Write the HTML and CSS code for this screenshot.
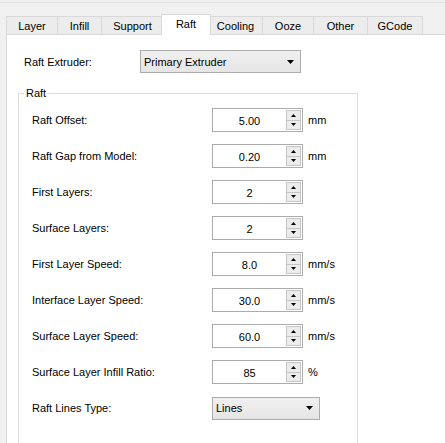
FILE: index.html
```html
<!DOCTYPE html>
<html>
<head>
<meta charset="utf-8">
<link rel="stylesheet" href="styles.css">
</head>
<body>
<div class="window">
  <div class="tabbar">
    <div class="tab t-layer">Layer</div>
    <div class="tab t-infill">Infill</div>
    <div class="tab t-support">Support</div>
    <div class="tab t-raft selected">Raft</div>
    <div class="tab t-cooling">Cooling</div>
    <div class="tab t-ooze">Ooze</div>
    <div class="tab t-other">Other</div>
    <div class="tab t-gcode">GCode</div>
  </div>
  <div class="pane">
    <div class="extruder-row">
      <span class="ext-label">Raft Extruder:</span>
      <div class="combo combo-ext"><span>Primary Extruder</span><svg class="arrow" width="7" height="4" viewBox="0 0 7 4"><path d="M0 0H7L3.5 4Z" fill="#000"/></svg></div>
    </div>
    <fieldset class="group">
      <legend>Raft</legend>
      <div class="rows">
        <div class="row"><span class="label">Raft Offset:</span><div class="spin"><span class="val">5.00</span><div class="btns"><div class="btn"><svg width="5" height="3" viewBox="0 0 5 3"><path d="M2.5 0L5 3H0Z" fill="#000"/></svg></div><div class="btn"><svg width="5" height="3" viewBox="0 0 5 3"><path d="M0 0H5L2.5 3Z" fill="#000"/></svg></div></div></div><span class="unit">mm</span></div>
        <div class="row"><span class="label">Raft Gap from Model:</span><div class="spin"><span class="val">0.20</span><div class="btns"><div class="btn"><svg width="5" height="3" viewBox="0 0 5 3"><path d="M2.5 0L5 3H0Z" fill="#000"/></svg></div><div class="btn"><svg width="5" height="3" viewBox="0 0 5 3"><path d="M0 0H5L2.5 3Z" fill="#000"/></svg></div></div></div><span class="unit">mm</span></div>
        <div class="row"><span class="label">First Layers:</span><div class="spin"><span class="val">2</span><div class="btns"><div class="btn"><svg width="5" height="3" viewBox="0 0 5 3"><path d="M2.5 0L5 3H0Z" fill="#000"/></svg></div><div class="btn"><svg width="5" height="3" viewBox="0 0 5 3"><path d="M0 0H5L2.5 3Z" fill="#000"/></svg></div></div></div></div>
        <div class="row"><span class="label">Surface Layers:</span><div class="spin"><span class="val">2</span><div class="btns"><div class="btn"><svg width="5" height="3" viewBox="0 0 5 3"><path d="M2.5 0L5 3H0Z" fill="#000"/></svg></div><div class="btn"><svg width="5" height="3" viewBox="0 0 5 3"><path d="M0 0H5L2.5 3Z" fill="#000"/></svg></div></div></div></div>
        <div class="row"><span class="label">First Layer Speed:</span><div class="spin"><span class="val">8.0</span><div class="btns"><div class="btn"><svg width="5" height="3" viewBox="0 0 5 3"><path d="M2.5 0L5 3H0Z" fill="#000"/></svg></div><div class="btn"><svg width="5" height="3" viewBox="0 0 5 3"><path d="M0 0H5L2.5 3Z" fill="#000"/></svg></div></div></div><span class="unit">mm/s</span></div>
        <div class="row"><span class="label">Interface Layer Speed:</span><div class="spin"><span class="val">30.0</span><div class="btns"><div class="btn"><svg width="5" height="3" viewBox="0 0 5 3"><path d="M2.5 0L5 3H0Z" fill="#000"/></svg></div><div class="btn"><svg width="5" height="3" viewBox="0 0 5 3"><path d="M0 0H5L2.5 3Z" fill="#000"/></svg></div></div></div><span class="unit">mm/s</span></div>
        <div class="row"><span class="label">Surface Layer Speed:</span><div class="spin"><span class="val">60.0</span><div class="btns"><div class="btn"><svg width="5" height="3" viewBox="0 0 5 3"><path d="M2.5 0L5 3H0Z" fill="#000"/></svg></div><div class="btn"><svg width="5" height="3" viewBox="0 0 5 3"><path d="M0 0H5L2.5 3Z" fill="#000"/></svg></div></div></div><span class="unit">mm/s</span></div>
        <div class="row"><span class="label">Surface Layer Infill Ratio:</span><div class="spin"><span class="val">85</span><div class="btns"><div class="btn"><svg width="5" height="3" viewBox="0 0 5 3"><path d="M2.5 0L5 3H0Z" fill="#000"/></svg></div><div class="btn"><svg width="5" height="3" viewBox="0 0 5 3"><path d="M0 0H5L2.5 3Z" fill="#000"/></svg></div></div></div><span class="unit">%</span></div>
        <div class="row"><span class="label">Raft Lines Type:</span><div class="combo combo-lines"><span>Lines</span><svg class="arrow" width="7" height="4" viewBox="0 0 7 4"><path d="M0 0H7L3.5 4Z" fill="#000"/></svg></div></div>
      </div>
    </fieldset>
  </div>
</div>
</body>
</html>
```

FILE: styles.css
```css
html, body {
  margin: 0;
  padding: 0;
  background: #f0f0f0;
  font-family: "Liberation Sans", Arial, sans-serif;
  font-size: 11px;
  color: #000;
  overflow: hidden;
}
.window {
  width: 445px;
  height: 443px;
  overflow: hidden;
  padding-top: 14px;
  box-sizing: border-box;
  border-top: 1px solid #e2e2e2;
  margin-top: 2px;
}
.window {
  padding-top: 11px;
}
.tabbar {
  display: flex;
  align-items: flex-end;
  height: 21px;
  padding-left: 6px;
}
.tab {
  box-sizing: border-box;
  height: 18px;
  margin-bottom: 1px;
  margin-right: -1px;
  border: 1px solid #d9d9d9;
  border-bottom: none;
  background: #ececec;
  display: flex;
  align-items: center;
  justify-content: center;
  padding-top: 1px;
}
.tab.selected {
  position: relative;
  z-index: 2;
  height: 21px;
  margin-bottom: 0;
  margin-left: -2px;
  margin-right: -3px;
  background: #fff;
  padding-top: 0;
  padding-bottom: 2px;
}
.t-layer { width: 52px; }
.t-infill { width: 45px; }
.t-support { width: 63px; }
.t-raft { width: 50px; }
.t-cooling { width: 55px; }
.t-ooze { width: 52px; }
.t-other { width: 55px; }
.t-gcode { width: 56px; }
.pane {
  margin-top: -1px;
  margin-left: 6px;
  width: 520px;
  height: 420px;
  background: #fff;
  border: 1px solid #d9d9d9;
  padding: 15px 0 0 11px;
  box-sizing: border-box;
}
.extruder-row {
  display: flex;
  align-items: center;
  height: 23px;
  padding-left: 6px;
}
.ext-label {
  width: 116px;
}
.combo {
  box-sizing: border-box;
  height: 23px;
  border: 1px solid #acacac;
  background: linear-gradient(#f0f0f0, #e5e5e5);
  display: flex;
  align-items: center;
  justify-content: space-between;
  padding: 0 6px 0 3px;
}
.combo-ext { width: 161px; }
.combo-lines { width: 108px; }
.arrow { display: block; }
.group {
  margin: 14px 0 0 0;
  padding: 0;
  width: 340px;
  box-sizing: border-box;
  border: 1px solid #dcdcdc;
  min-width: 0;
  height: 400px;
}
.group legend {
  margin-left: 5px;
  padding: 0 2px;
  line-height: 13px;
}
.rows {
  display: flex;
  flex-direction: column;
  gap: 12px;
  padding: 8px 0 0 13px;
}
.row {
  display: flex;
  align-items: center;
  height: 24px;
}
.label {
  width: 180px;
}
.spin {
  box-sizing: border-box;
  width: 91px;
  height: 24px;
  border: 1px solid #ababab;
  background: #fff;
  display: flex;
  align-items: stretch;
}
.val {
  flex: 1;
  display: flex;
  align-items: center;
  justify-content: center;
  padding-top: 1px;
}
.btns {
  width: 15px;
  margin: 1px 1px 1px 0;
  display: flex;
  flex-direction: column;
}
.btn {
  flex: 1;
  box-sizing: border-box;
  border: 1px solid #c5c5c5;
  background: #ececec;
  display: flex;
  align-items: center;
  justify-content: center;
}
.btn + .btn { border-top: none; }
.btn svg { display: block; }
.unit {
  margin-left: 5px;
}
```
